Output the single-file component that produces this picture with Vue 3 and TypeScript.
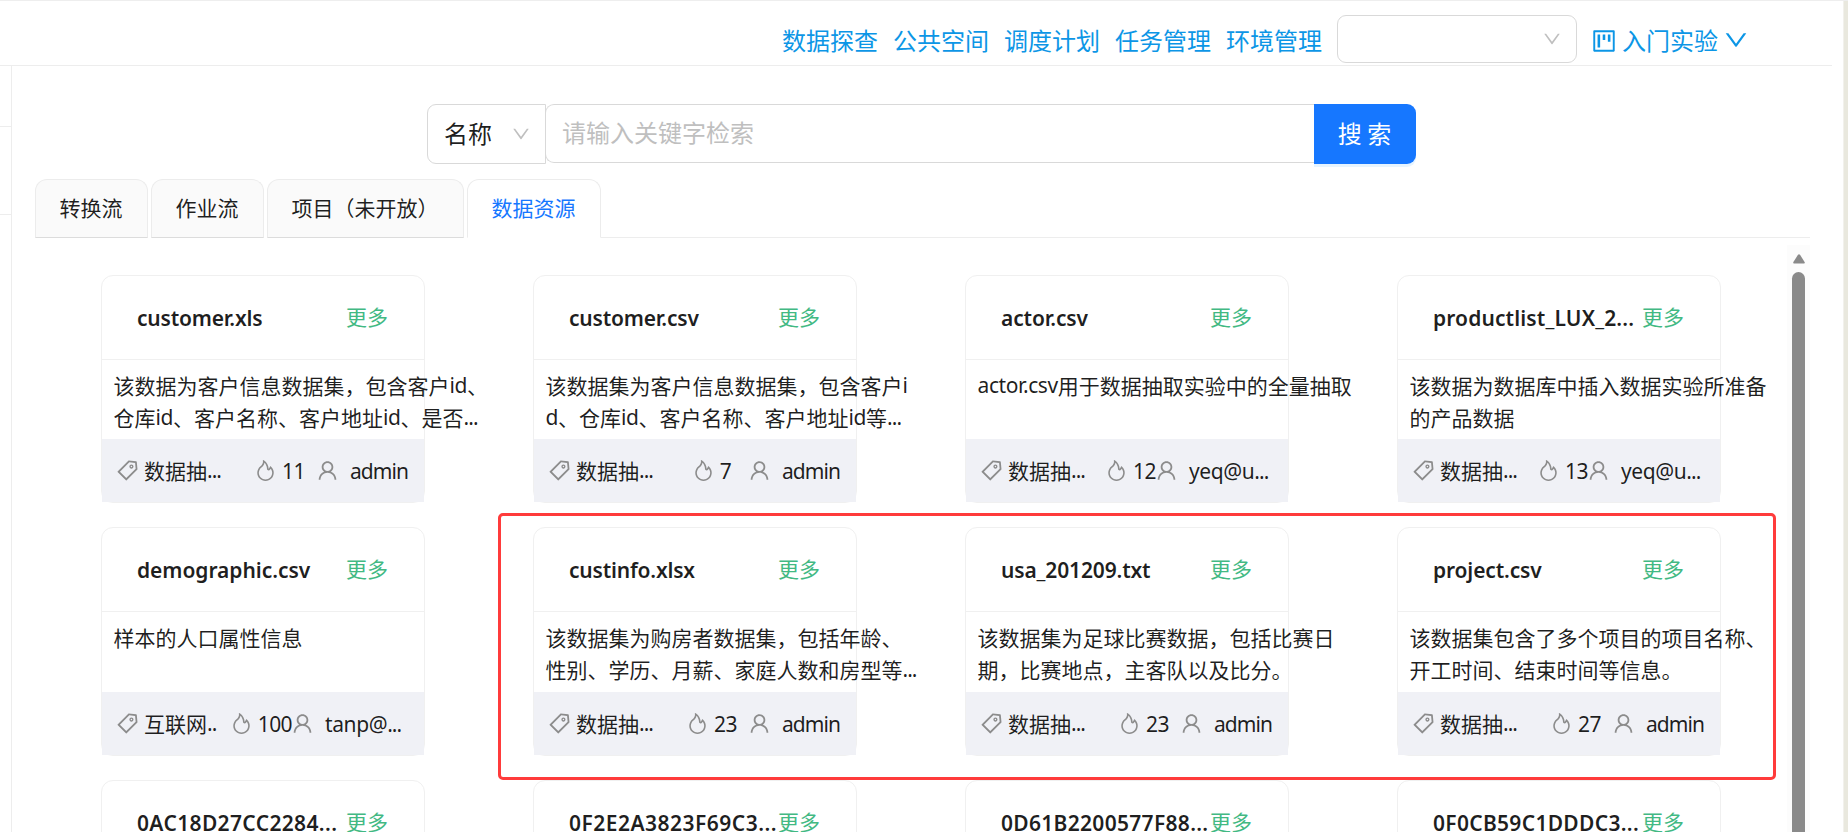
<script setup lang="ts">
interface Resource {
  title: string
  tracking: number
  lines: string[]
  tag: string
  hot: string
  owner: string
}

interface Run {
  text: string
  kind: 'cjk' | 'latin' | 'dots'
}

const icons = {
  down: 'M884 256h-75c-5.1 0-9.9 2.5-12.9 6.6L512 654.2 227.9 262.6c-3-4.1-7.8-6.6-12.9-6.6h-75c-6.5 0-10.3 7.4-6.5 12.7l352.6 486.1c12.8 17.6 39 17.6 51.7 0l352.6-486.1c3.9-5.3.1-12.7-6.4-12.7z',
  project:
    'M280 752h80c4.4 0 8-3.6 8-8V280c0-4.4-3.6-8-8-8h-80c-4.4 0-8 3.6-8 8v464c0 4.4 3.6 8 8 8zm192-280h80c4.4 0 8-3.6 8-8V280c0-4.4-3.6-8-8-8h-80c-4.4 0-8 3.6-8 8v184c0 4.4 3.6 8 8 8zm192 72h80c4.4 0 8-3.6 8-8V280c0-4.4-3.6-8-8-8h-80c-4.4 0-8 3.6-8 8v256c0 4.4 3.6 8 8 8zm216-432H144c-17.7 0-32 14.3-32 32v736c0 17.7 14.3 32 32 32h736c17.7 0 32-14.3 32-32V144c0-17.7-14.3-32-32-32zm-40 728H184V184h656v656z',
  tag: 'M938 458.8l-29.6-312.6c-1.5-16.2-14.4-29-30.6-30.6L565.2 86h-.4c-3.2 0-5.7 1-7.6 2.9L88.9 557.2a9.96 9.96 0 000 14.1l363.8 363.8c1.9 1.9 4.4 2.9 7.1 2.9s5.2-1 7.1-2.9l468.3-468.3c2-2.1 3-5 2.8-8zM459.7 834.7L189.3 564.3 589 164.6 836 188l23.4 247-399.7 399.7zM680 256c-48.5 0-88 39.5-88 88s39.5 88 88 88 88-39.5 88-88-39.5-88-88-88zm0 120c-17.7 0-32-14.3-32-32s14.3-32 32-32 32 14.3 32 32-14.3 32-32 32z',
  fire: 'M834.1 469.2A347.49 347.49 0 00751.2 354l-29.1-26.7a8.09 8.09 0 00-13 3.3l-13 37.3c-8.1 23.4-23 47.3-44.1 70.8-1.4 1.5-3 1.9-4.1 2-1.1.1-2.8-.1-4.3-1.5-1.4-1.2-2.1-3-2-4.8 3.7-60.2-14.3-128.1-53.7-202C555.3 171 510 123.1 453.4 89.7l-41.3-24.3c-5.4-3.2-12.3 1-12 7.3l2.2 48c1.5 32.8-2.3 61.8-11.3 85.9-11 29.5-26.8 56.9-47 81.5a295.64 295.64 0 01-47.5 46.1 352.6 352.6 0 00-100.3 121.5A347.75 347.75 0 00160 610c0 47.2 9.3 92.9 27.7 136a349.4 349.4 0 0075.5 110.9c32.4 32 70 57.2 111.9 74.7C418.5 949.8 464.5 959 512 959s93.5-9.2 136.9-27.3A348.6 348.6 0 00760.8 857c32.4-32 57.8-69.4 75.5-110.9a344.2 344.2 0 0027.7-136c0-48.8-10-96.2-29.9-140.9zM713 808.5c-53.7 53.2-125 82.4-201 82.4s-147.3-29.2-201-82.4c-53.5-53.1-83-123.5-83-198.4 0-43.5 9.8-85.2 29.1-124 18.8-37.9 46.8-71.8 80.8-97.9a349.6 349.6 0 0058.6-56.8c25-30.5 44.6-64.5 58.2-101a240 240 0 0012.1-46.5c24.1 22.2 44.3 49 61.2 80.4 33.4 62.6 48.8 118.3 45.8 165.7a74.01 74.01 0 0024.4 59.8 73.36 73.36 0 0053.4 18.8c19.7-1 37.8-9.7 51-24.4 13.3-14.9 24.8-30.1 34.4-45.6 14 17.9 25.7 37.4 35 58.4 15.9 35.8 24 73.9 24 113.1 0 74.9-29.5 145.4-83 198.4z',
  user: 'M858.5 763.6a374 374 0 00-80.6-119.5 375.63 375.63 0 00-119.5-80.6c-.4-.2-.8-.3-1.2-.5C719.5 518 760 444.7 760 362c0-137-111-248-248-248S264 225 264 362c0 82.7 40.5 156 102.8 201.1-.4.2-.8.3-1.2.5-44.8 18.9-85 46-119.5 80.6a375.63 375.63 0 00-80.6 119.5A371.7 371.7 0 00136 901.8a8 8 0 008 8.2h60c4.4 0 7.9-3.5 8-7.8 2-77.2 33-149.5 87.8-204.3 56.7-56.7 132-87.9 212.2-87.9s155.5 31.2 212.2 87.9C779 752.7 810 825 812 902.2c.1 4.4 3.6 7.8 8 7.8h60a8 8 0 008-8.2c-1-47.8-10.9-94.3-29.5-138.2zM512 534c-45.9 0-89.1-17.9-121.6-50.4S340 407.9 340 362c0-45.9 17.9-89.1 50.4-121.6S466.1 190 512 190s89.1 17.9 121.6 50.4S684 316.1 684 362c0 45.9-17.9 89.1-50.4 121.6S557.9 534 512 534z',
}

const navItems = ['数据探查', '公共空间', '调度计划', '任务管理', '环境管理']
const tabs = ['转换流', '作业流', '项目（未开放）', '数据资源']
const activeTab = '数据资源'

const resources: Resource[] = [
  { title: 'customer.xls', tracking: -0.2, lines: ['该数据为客户信息数据集，包含客户id、', '仓库id、客户名称、客户地址id、是否...'], tag: '数据抽...', hot: '11', owner: 'admin' },
  { title: 'customer.csv', tracking: -0.2, lines: ['该数据集为客户信息数据集，包含客户i', 'd、仓库id、客户名称、客户地址id等...'], tag: '数据抽...', hot: '7', owner: 'admin' },
  { title: 'actor.csv', tracking: -0.15, lines: ['actor.csv用于数据抽取实验中的全量抽取'], tag: '数据抽...', hot: '12', owner: 'yeq@u...' },
  { title: 'productlist_LUX_2...', tracking: 0.12, lines: ['该数据为数据库中插入数据实验所准备', '的产品数据'], tag: '数据抽...', hot: '13', owner: 'yeq@u...' },
  { title: 'demographic.csv', tracking: -0.05, lines: ['样本的人口属性信息'], tag: '互联网..', hot: '100', owner: 'tanp@...' },
  { title: 'custinfo.xlsx', tracking: -0.2, lines: ['该数据集为购房者数据集，包括年龄、', '性别、学历、月薪、家庭人数和房型等...'], tag: '数据抽...', hot: '23', owner: 'admin' },
  { title: 'usa_201209.txt', tracking: -0.15, lines: ['该数据集为足球比赛数据，包括比赛日', '期，比赛地点，主客队以及比分。'], tag: '数据抽...', hot: '23', owner: 'admin' },
  { title: 'project.csv', tracking: -0.15, lines: ['该数据集包含了多个项目的项目名称、', '开工时间、结束时间等信息。'], tag: '数据抽...', hot: '27', owner: 'admin' },
  { title: '0AC18D27CC2284...', tracking: 0.35, lines: [], tag: '', hot: '', owner: '' },
  { title: '0F2E2A3823F69C3...', tracking: 0.48, lines: [], tag: '', hot: '', owner: '' },
  { title: '0D61B2200577F88...', tracking: 0.3, lines: [], tag: '', hot: '', owner: '' },
  { title: '0F0CB59C1DDDC3...', tracking: 0.3, lines: [], tag: '', hot: '', owner: '' },
]

// Splits mixed text so that Latin letters and trailing dots get their own tracking.
function runs(text: string): Run[] {
  return (text.match(/\.{2,}|[\x21-\x2d\x2f-\x7e]+(?:\.[\x21-\x2d\x2f-\x7e]+)*|[^\x21-\x7e]+/g) ?? []).map((part) => ({
    text: part,
    kind: /^\.{2,}$/.test(part) ? 'dots' : /^[\x21-\x7e]/.test(part) ? 'latin' : 'cjk',
  }))
}
</script>

<template>
  <div class="page">
    <header class="topbar">
      <nav class="nav">
        <a v-for="item in navItems" :key="item">{{ item }}</a>
      </nav>
      <div class="picker">
        <svg class="icon caret" viewBox="64 64 896 896"><path :d="icons.down" /></svg>
      </div>
      <div class="lab">
        <svg class="icon board" viewBox="64 64 896 896"><path :d="icons.project" /></svg>
        <span>入门实验</span>
        <svg class="icon" viewBox="64 64 896 896"><path :d="icons.down" /></svg>
      </div>
    </header>

    <div class="body">
      <aside class="rail"><i></i><i></i></aside>
      <main class="main">
        <div class="search">
          <div class="field">
            <span>名称</span>
            <svg class="icon caret" viewBox="64 64 896 896"><path :d="icons.down" /></svg>
          </div>
          <div class="keyword">请输入关键字检索</div>
          <button class="go">搜 索</button>
        </div>

        <div class="tabs">
          <div v-for="tab in tabs" :key="tab" class="tab" :class="{ active: tab === activeTab }">{{ tab }}</div>
          <div class="rest"></div>
        </div>

        <div class="pane">
          <div class="grid">
            <article v-for="r in resources" :key="r.title" class="card">
              <div class="head">
                <h3 :style="{ letterSpacing: r.tracking + 'px' }">{{ r.title }}</h3>
                <a>更多</a>
              </div>
              <div class="desc">
                <p v-for="line in r.lines" :key="line">
                  <span v-for="(run, i) in runs(line)" :key="i" :class="run.kind">{{ run.text }}</span>
                </p>
              </div>
              <div class="foot">
                <div class="cell kind">
                  <svg class="icon" viewBox="64 64 896 896"><path :d="icons.tag" /></svg>
                  <span class="label"><span v-for="(run, i) in runs(r.tag)" :key="i" :class="run.kind">{{ run.text }}</span></span>
                </div>
                <div class="cell hot" :class="{ tight: r.owner.includes('@') }">
                  <svg class="icon" viewBox="64 64 896 896"><path :d="icons.fire" /></svg>
                  <span class="num">{{ r.hot }}</span>
                </div>
                <div class="cell owner" :class="{ tight: r.owner.includes('@') }">
                  <svg class="icon" viewBox="64 64 896 896"><path :d="icons.user" /></svg>
                  <span class="label"><span v-for="(run, i) in runs(r.owner)" :key="i" :class="run.kind">{{ run.text }}</span></span>
                </div>
              </div>
            </article>
          </div>
          <div class="scroll">
            <svg viewBox="0 0 12 10"><path d="M5 .8Q6-.4 7 .8L11.6 8Q12.2 9.3 11 9.5H1Q-.2 9.3.4 8Z" /></svg>
            <div class="thumb"></div>
          </div>
          <div class="marker"></div>
        </div>
      </main>
    </div>
    <div class="edge"></div>
  </div>
</template>

<style>
html,
body {
  margin: 0;
  background: #fff;
  overflow: hidden;
}
</style>

<style scoped>
.page {
  position: relative;
  box-sizing: border-box;
  width: 1848px;
  height: 832px;
  overflow: hidden;
  background: #fff;
  border-top: 1px solid #eee;
  font-family: 'Noto Sans', 'Noto Sans CJK SC', sans-serif;
  color: rgba(0, 0, 0, 0.88);
}
.icon {
  display: block;
  flex: none;
  width: 24px;
  height: 24px;
  fill: currentColor;
}
.topbar {
  box-sizing: border-box;
  display: flex;
  align-items: flex-start;
  gap: 15px;
  width: 1832px;
  height: 65px;
  padding: 14px 0 0 782px;
  border-bottom: 1px solid #ededed;
  color: #0c96e6;
  font: 24px/36px 'Noto Sans CJK SC', sans-serif;
}
.nav {
  display: flex;
  gap: 15px;
  padding-top: 7px;
}
.picker {
  box-sizing: border-box;
  display: flex;
  align-items: center;
  justify-content: flex-end;
  width: 240px;
  height: 48px;
  padding-right: 15px;
  border: 1px solid #d9d9d9;
  border-radius: 9px;
}
.caret {
  width: 18px;
  height: 18px;
  color: #bfbfbf;
}
.lab {
  display: flex;
  align-items: center;
  padding-top: 7px;
}
.lab .board {
  margin-top: 2px;
}
.lab span {
  margin: 0 6px;
}
.body {
  display: flex;
  height: 766px;
}
.rail {
  box-sizing: border-box;
  width: 12px;
  flex: none;
  padding-top: 60px;
  border-right: 1px solid #ededed;
}
.rail i {
  display: block;
  height: 1px;
  margin-bottom: 87px;
  background: #ededed;
}
.main {
  width: 1775px;
  padding: 38px 0 0 23px;
}
.search {
  display: flex;
  align-items: flex-start;
  margin-left: 392px;
  font: 24px/36px 'Noto Sans CJK SC', sans-serif;
}
.field {
  box-sizing: border-box;
  display: flex;
  align-items: center;
  justify-content: space-between;
  width: 119px;
  height: 60px;
  padding: 0 15px 0 16px;
  border: 1px solid #d9d9d9;
  border-radius: 9px 0 0 9px;
}
.field span {
  padding-bottom: 2px;
}
.keyword {
  box-sizing: border-box;
  width: 769px;
  height: 59px;
  margin-left: -1px;
  padding: 9px 16px;
  border: 1px solid #d9d9d9;
  border-right: 0;
  border-radius: 9px 0 0 9px;
  color: #bfbfbf;
}
.go {
  width: 102px;
  height: 60px;
  padding: 0 1px 2px 0;
  border: 0;
  border-radius: 0 9px 9px 0;
  background: #1677ff;
  box-shadow: 0 3px 0 rgba(5, 145, 255, 0.1);
  color: #fff;
  font: inherit;
}
.tabs {
  display: flex;
  margin-top: 15px;
  font: 21px/33px 'Noto Sans CJK SC', sans-serif;
}
.tab {
  box-sizing: border-box;
  height: 59px;
  padding: 11px 24.5px 0 23.5px;
  border: 1px solid #ececec;
  border-bottom-color: #dcdcdc;
  border-radius: 12px 12px 0 0;
  background: #fafafa;
  margin-right: 3px;
}
.tab.active {
  margin-right: 0;
  border-bottom-color: #fff;
  background: #fff;
  color: #1677ff;
}
.rest {
  flex: 1;
  border-bottom: 1px solid #ededed;
}
.pane {
  position: relative;
  display: flex;
  justify-content: space-between;
  height: 594px;
}
.grid {
  display: grid;
  grid-template-columns: repeat(4, 324px);
  grid-auto-rows: 228.4px;
  gap: 24px 108px;
  padding: 37.1px 0 0 66px;
}
.card {
  box-sizing: border-box;
  display: flex;
  flex-direction: column;
  border: 1px solid #f0f0f0;
  border-radius: 12px;
  font-size: 21px;
  line-height: 31.5px;
}
.head {
  box-sizing: border-box;
  display: flex;
  align-items: center;
  height: 84px;
  padding: 0 0 0 35px;
  border-bottom: 1px solid #f0f0f0;
  white-space: nowrap;
}
.head h3 {
  width: 209px;
  flex: none;
  margin: 0;
  padding-top: 2px;
  font-size: 21px;
  font-weight: 600;
}
.head a {
  flex: none;
  color: #42b983;
}
.desc {
  height: 69.2px;
  padding: 10px 0 0 11.5px;
  white-space: nowrap;
}
.desc p {
  display: flex;
  margin: 0;
}
.cjk {
  font-family: 'Noto Sans CJK SC', sans-serif;
}
.latin {
  letter-spacing: -0.4px;
}
.dots {
  letter-spacing: -0.95px;
}
.foot {
  display: flex;
  align-items: center;
  flex: 1;
  background: #f0f1f6;
  white-space: nowrap;
}
.cell {
  display: flex;
  align-items: center;
}
.cell .icon {
  width: 21px;
  height: 21px;
  color: #8c8c8c;
}
.label {
  display: flex;
}
.kind {
  flex: 1;
  min-width: 0;
  gap: 6px;
  padding-left: 15px;
}
.hot {
  min-width: 74px;
  padding-left: 2px;
  justify-content: center;
  gap: 6px;
}
.num {
  padding-top: 2px;
  letter-spacing: -0.6px;
}
.hot.tight {
  min-width: 50px;
}
.owner {
  width: 107px;
  gap: 12px;
}
.owner .label {
  padding-top: 2px;
}
.owner .latin {
  letter-spacing: -0.95px;
}
.owner.tight {
  width: 132px;
}
.owner.tight .latin {
  letter-spacing: -0.4px;
}
.scroll {
  display: flex;
  flex-direction: column;
  align-items: center;
  width: 23px;
  margin-top: 7px;
  background: #fcfcfc;
}
.scroll svg {
  width: 12px;
  height: 10px;
  margin: 9px 0 8px;
  flex: none;
  fill: #8a8a8a;
}
.thumb {
  flex: 1;
  width: 13px;
  border-radius: 7px 7px 0 0;
  background: #8a8a8a;
}
/* Highlight frame drawn over three cards of the second row */
.marker {
  position: absolute;
  left: 463px;
  top: 274.5px;
  box-sizing: border-box;
  width: 1278px;
  height: 267px;
  border: 3px solid #ff3b3b;
  border-radius: 5px;
}
.edge {
  position: absolute;
  top: -1px;
  right: 0;
  width: 5px;
  height: 832px;
  box-sizing: border-box;
  border-left: 1px solid #f2f1ec;
  background: #e9e8de;
}
</style>
